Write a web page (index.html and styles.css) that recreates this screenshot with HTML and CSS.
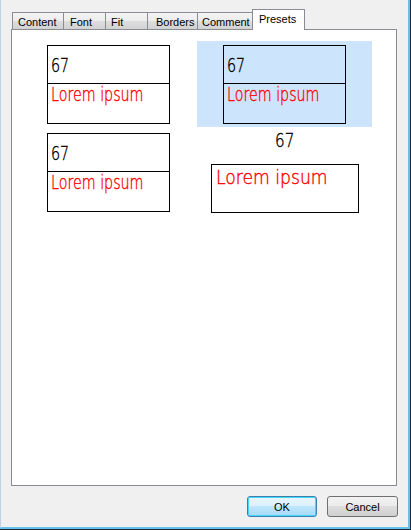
FILE: index.html
```html
<!DOCTYPE html>
<html lang="en">
<head>
    <meta charset="UTF-8">
    <title>Format Cells</title>
    <link rel="stylesheet" href="styles.css">
</head>
<body>
    <div class="dialog">
        <div class="tabs">
            <div class="tab tab-content">Content</div>
            <div class="tab tab-font">Font</div>
            <div class="tab tab-fit">Fit</div>
            <div class="tab tab-borders">Borders</div>
            <div class="tab tab-comment">Comment</div>
            <div class="tab active">Presets</div>
        </div>
        <div class="pane">
            <div class="presets">
                <div class="preset">
                    <div class="card">
                        <div class="card-value"><span>67</span></div>
                        <div class="card-label"><span>Lorem ipsum</span></div>
                    </div>
                </div>
                <div class="preset selected">
                    <div class="card">
                        <div class="card-value"><span>67</span></div>
                        <div class="card-label"><span>Lorem ipsum</span></div>
                    </div>
                </div>
                <div class="preset">
                    <div class="card">
                        <div class="card-value"><span>67</span></div>
                        <div class="card-label"><span>Lorem ipsum</span></div>
                    </div>
                </div>
                <div class="preset">
                    <div class="plain-value"><span>67</span></div>
                    <div class="plain-box"><span>Lorem ipsum</span></div>
                </div>
            </div>
        </div>
        <div class="buttons">
            <button class="btn btn-default">OK</button>
            <button class="btn btn-cancel">Cancel</button>
        </div>
    </div>
</body>
</html>
```

FILE: styles.css
```css
body {
    margin: 0;
    background: #1d2b38;
    font-family: 'Liberation Sans', Arial, sans-serif;
    font-size: 11px;
}
.dialog {
    width: 410px;
    height: 529px;
    box-sizing: border-box;
    background: #f0f0f0;
    border-left: 1px solid #bcd0e6;
    border-right: 2px solid #66c0ea;
    border-bottom: 2px solid #66c0ea;
    padding: 9px 11px 0 10px;
}

/* tab strip */
.tabs {
    display: flex;
    align-items: flex-end;
    height: 20px;
    margin-left: 1px;
}
.tab {
    height: 17px;
    box-sizing: border-box;
    border-top: 1px solid #898c95;
    border-left: 1px solid #898c95;
    background: linear-gradient(#f4f4f4, #ececec 50%, #dedede 50%, #d2d2d2);
    padding: 2px 0 0 5px;
    line-height: 14px;
    color: #000;
    white-space: nowrap;
    overflow: hidden;
}
.tab-content { width: 51px; }
.tab-font { width: 42px; padding-left: 6px; }
.tab-fit { width: 42px; }
.tab-borders { width: 50px; padding-left: 8px; }
.tab-comment { width: 55px; padding-left: 4px; }
.tab.active {
    position: relative;
    z-index: 1;
    width: 53px;
    height: 21px;
    margin-bottom: -1px;
    border-right: 1px solid #898c95;
    background: #fff;
    padding-left: 6px;
}

/* page */
.pane {
    height: 457px;
    box-sizing: border-box;
    border: 1px solid #898c95;
    background: #fff;
    padding: 11px 0 0 9px;
}
.presets {
    display: grid;
    grid-template-columns: 175px 175px;
    gap: 2px 1px;
}
.preset {
    display: flex;
    flex-direction: column;
    align-items: center;
    padding: 4px 0 3px;
}
.preset.selected {
    background: #cce4fc;
}
.card {
    width: 123px;
    height: 79px;
    box-sizing: border-box;
    border: 1px solid #000;
}

/* thin drafting-style lettering in the previews */
.card-value span,
.card-label span,
.plain-value span,
.plain-box span {
    display: inline-block;
    transform-origin: left center;
    white-space: nowrap;
    font-family: 'DejaVu Sans ExtraLight', 'DejaVu Sans', sans-serif;
    font-weight: 200;
    -webkit-text-stroke: 0.4px currentColor;
}
.card-value {
    height: 38px;
    box-sizing: border-box;
    border-bottom: 1px solid #000;
    padding: 8px 0 0 3px;
    font-size: 19px;
    line-height: 22px;
    color: #000;
}
.card-label {
    padding: 0 0 0 3px;
    font-size: 19px;
    line-height: 20px;
    color: #f00;
}
.card-value span,
.card-label span {
    transform: scaleX(0.75);
}
.plain-value {
    font-size: 20px;
    line-height: 15px;
    color: #000;
}
.plain-value span {
    transform-origin: center;
    transform: scaleX(0.76);
}
.plain-box {
    width: 148px;
    height: 49px;
    box-sizing: border-box;
    border: 1px solid #000;
    margin-top: 16px;
    padding: 0 0 0 4px;
    font-size: 20px;
    line-height: 24px;
    color: #f00;
}
.plain-box span {
    transform: scaleX(0.86);
}

/* dialog buttons */
.buttons {
    display: flex;
    justify-content: flex-end;
    gap: 10px;
    margin-top: 10px;
    margin-right: -1px;
}
.btn {
    height: 21px;
    box-sizing: border-box;
    border: 1px solid #707070;
    border-radius: 3px;
    background: linear-gradient(#f2f2f2, #ebebeb 50%, #dddddd 50%, #cfcfcf);
    font-family: 'Liberation Sans', Arial, sans-serif;
    font-size: 11px;
    color: #000;
    padding: 0;
}
.btn-default {
    width: 70px;
    border-color: #3c7fb1;
    background: linear-gradient(#eaf6fd, #d9f0fc 50%, #bee6fd 50%, #a7d9f5);
    box-shadow: inset 0 0 0 1px #48d7fb;
}
.btn-cancel {
    width: 71px;
}
```
